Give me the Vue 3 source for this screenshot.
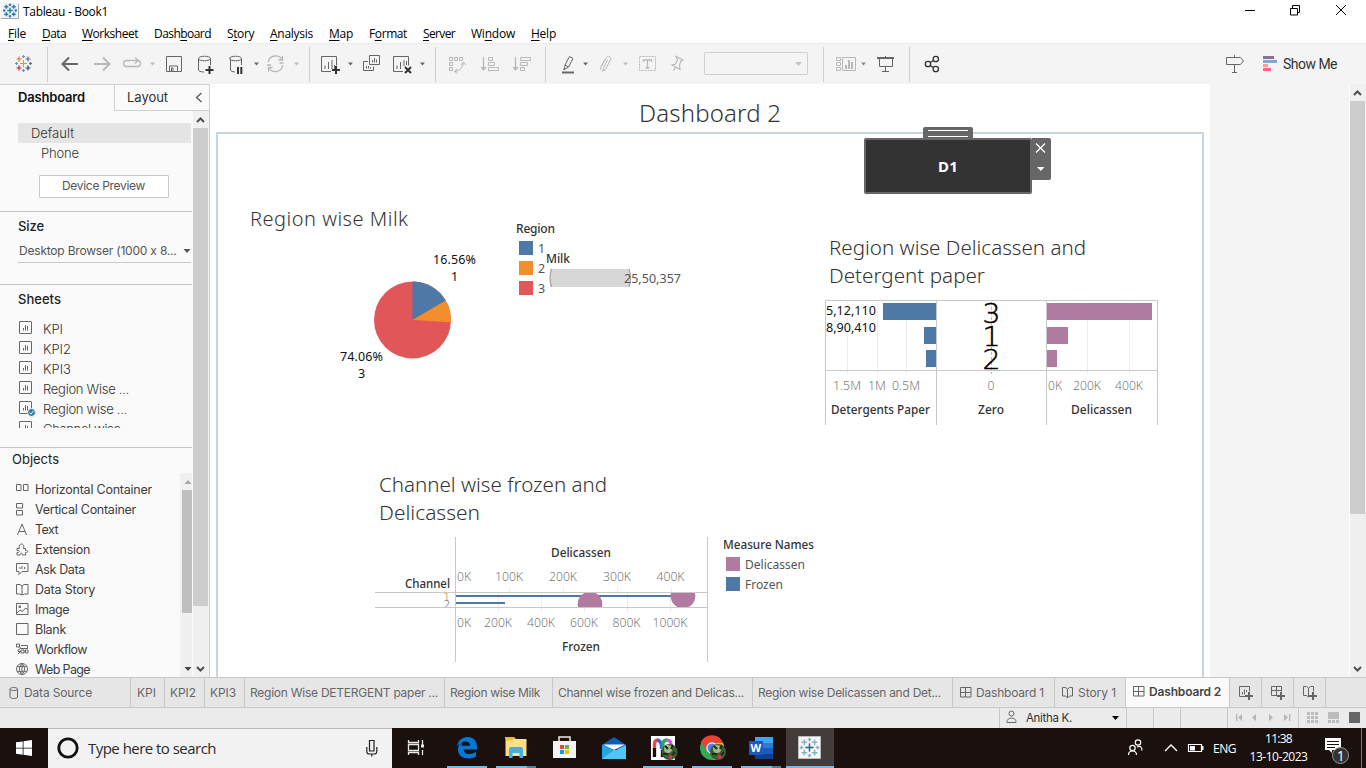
<script setup>
const vFit = {
  mounted(el, { value }) {
    const range = document.createRange()
    range.selectNodeContents(el)
    const natural = range.getBoundingClientRect().width
    el.style.letterSpacing = (value - natural) / el.textContent.length + 'px'
    el.style.width = value + 'px'
  }
}

const menus = [
  ['', 'F', 'ile', 18], ['', 'D', 'ata', 24], ['', 'W', 'orksheet', 56], ['Dash', 'b', 'oard', 57],
  ['S', 't', 'ory', 27], ['', 'A', 'nalysis', 43], ['', 'M', 'ap', 24], ['F', 'o', 'rmat', 38],
  ['', 'S', 'erver', 32], ['Wi', 'n', 'dow', 44], ['', 'H', 'elp', 25]
]

const sheets = [
  { name: 'KPI', w: 20 }, { name: 'KPI2', w: 28 }, { name: 'KPI3', w: 28 },
  { name: 'Region Wise ...', w: 86 }, { name: 'Region wise ...', w: 84, used: true }, { name: 'Channel wise ...', w: 91 }
]

const objects = [
  { name: 'Horizontal Container', w: 117, icon: 'M.5 1.5h4.500v6h-4.500zM7.500 1.500h4.500v6H7.500z' },
  { name: 'Vertical Container', w: 101, icon: 'M.5.5h6v4.500h-6zM.5 7.500h6v4.500h-6z' },
  { name: 'Text', w: 23, icon: 'M1.500 12L6 1L10.500 12M3 8.500h6' },
  { name: 'Extension', w: 55, icon: 'M1 5.500h2.500c-1-3 .5-4.500 2-4.500s3 1.500 2 4.500h2v2c3-.5 3 2.500 0 2V12H6.500c0-2.500-2.500-2.500-2.500 0H1V9.500c3 .5 3-2.500 0-2z' },
  { name: 'Ask Data', w: 50, icon: 'M.5.5h11.500v8H6L3 11.500V8.500H.5zM4 6V4M6 6V3M8.500 6V4' },
  { name: 'Data Story', w: 60, icon: 'M.5 1.500h3.500L6 3l2-1.500h4v9.500H8.500L6 12L3.500 11H.5zM6 3v9' },
  { name: 'Image', w: 34, icon: 'M.5.5h11.500v11H.5zM1 10L4 7l2 1.500l4-3.500l2 2M3 3h1.500v1.500H3z' },
  { name: 'Blank', w: 31, icon: 'M.5.5h11.500v11H.5z' },
  { name: 'Workflow', w: 52, icon: 'M.5 1h3v3h-3zM5 2.500h6.500v3H4.500L2 7v1.500h3M5 7h3v3H5zM8 8.500h1.500M9.500 7h2.500v3H9.500zM2 11l2-2M3.500 4l2 2' },
  { name: 'Web Page', w: 55, icon: 'M6 .5a5.500 5.500 0 1 0 .01 0M6 .5c-3.500 3-3.500 8 0 11c3.500-3 3.500-8 0-11M6 .5v11M1.200 3.700h9.600M1.200 8.300h9.600' }
]

const tabs = [
  { name: 'KPI', w: 34, t: 19, pad: 7 }, { name: 'KPI2', w: 40, t: 26, pad: 6 }, { name: 'KPI3', w: 40, t: 26, pad: 6 },
  { name: 'Region Wise DETERGENT paper ...', w: 200, t: 188, pad: 6 }, { name: 'Region wise Milk', w: 108, t: 90, pad: 6 },
  { name: 'Channel wise frozen and Delicas...', w: 200, t: 186, pad: 6 },
  { name: 'Region wise Delicassen and Det...', w: 200, t: 183, pad: 6 },
  { name: 'Dashboard 1', w: 102, t: 68, pad: 8, icon: 'grid' }, { name: 'Story 1', w: 71, t: 38, pad: 8, icon: 'book' },
  { name: 'Dashboard 2', w: 104, t: 72, pad: 8, icon: 'grid', active: true }
]

const milkTexts = [
  ['Region wise Milk', 250, 226, 158, 'title'],
  ['16.56%', 433, 264, 43, 'mark'], ['1', 451, 281, 7, 'mark'],
  ['74.06%', 340, 361, 43, 'mark'], ['3', 358, 378, 7, 'mark'],
  ['Region', 516, 233, 39, 'head'], ['1', 538, 253, 7, 'item'], ['2', 538, 273, 7, 'item'], ['3', 538, 293, 7, 'item'],
  ['Milk', 546, 263, 24, 'head'], ['25,50,357', 624, 283, 57, 'item']
]
const deliTexts = [
  ['Region wise Delicassen and', 829, 255, 257, 'title'], ['Detergent paper', 829, 283, 156, 'title'],
  ['5,12,110', 826, 315, 50, 'mark'], ['8,90,410', 826, 332, 50, 'mark'],
  ['3', 982.500, 322.500, 18, 'big'], ['1', 982.500, 345.500, 18, 'big'], ['2', 982.500, 368.500, 18, 'big'],
  ['1.5M', 833, 390, 28, 'axis'], ['1M', 868, 390, 18, 'axis'], ['0.5M', 892, 390, 28, 'axis'], ['0', 987.500, 390, 7, 'axis'],
  ['0K', 1048, 390, 14, 'axis'], ['200K', 1073, 390, 28, 'axis'], ['400K', 1115, 390, 28, 'axis'],
  ['Detergents Paper', 831, 414, 99, 'head'], ['Zero', 978, 414, 26, 'head'], ['Delicassen', 1071, 414, 61, 'head']
]
const channelTexts = [
  ['Channel wise frozen and', 379, 492, 228, 'title'], ['Delicassen', 379, 520, 101, 'title'],
  ['Delicassen', 551, 557, 60, 'head'], ['Channel', 405, 588, 45, 'head'], ['Frozen', 562, 651, 38, 'head'],
  ['0K', 457, 581, 14, 'axis'], ['100K', 495, 581, 28, 'axis'], ['200K', 549, 581, 28, 'axis'], ['300K', 603, 581, 28, 'axis'], ['400K', 656.500, 581, 28, 'axis'],
  ['0K', 457, 627, 14, 'axis'], ['200K', 484, 627, 28, 'axis'], ['400K', 527, 627, 28, 'axis'], ['600K', 570, 627, 28, 'axis'], ['800K', 612.500, 627, 28, 'axis'], ['1000K', 652.500, 627, 35, 'axis'],
  ['Measure Names', 723, 549, 91, 'head'], ['Delicassen', 745, 569, 60, 'item'], ['Frozen', 745, 589, 38, 'item']
]

// Small plus signs forming the product mark, centred on 0,0.
const markPluses = [
  [0, 0, 3.500, '#eb912c'], [-4.500, -4.500, 2.500, '#e8762c'], [4.500, -4.500, 2.500, '#5c6692'], [-4.500, 4.500, 2.500, '#c72035'], [4.500, 4.500, 2.500, '#1f457e'],
  [0, -7, 1.500, '#7199a6'], [0, 7, 1.500, '#7b86b5'], [-7, 0, 1.500, '#5b9bb0'], [7, 0, 1.500, '#5c6692']
]
const plus = (x, y, r) => `M${x - r} ${y}h${2 * r}M${x} ${y - r}v${2 * r}`
const allPluses = markPluses.map(p => plus(p[0], p[1], p[2])).join('')
</script>

<template>
  <div class="screen">
    <header class="titlebar">
      <svg width="18" height="20" viewBox="0 0 18 20"><rect x="0" y="3" width="18" height="16" fill="#eef4f8" /><path d="M17.500 4v14.500H0" stroke="#aaa" fill="none" /><path :d="allPluses" transform="translate(9 10.500) scale(.82)" stroke="#2f7db0" stroke-width="1.800" /></svg>
      <span v-fit="85" class="app-name">Tableau - Book1</span>
      <svg class="winctl" width="126" height="22" viewBox="1240 0 126 22"><path d="M1245 10.500h10M1290.500 8.500h7v6.500h-7zM1292.500 8V5.500h7v7h-2M1336 5l10 10M1346 5l-10 10" fill="none" stroke="#000" /></svg>
    </header>
    <nav class="menubar">
      <span v-for="m in menus" :key="m[2]" v-fit="m[3]">{{ m[0] }}<u>{{ m[1] }}</u>{{ m[2] }}</span>
    </nav>

    <div class="toolbar">
      <svg width="48" height="41" viewBox="0 43 48 41"><g transform="translate(23.500 63.500)" fill="none" stroke-width="1.200"><path v-for="(p, i) in markPluses" :key="i" :d="plus(p[0], p[1], p[2])" :stroke="p[3]" /></g><path class="sep" d="M47.500 47v35" /></svg>
      <svg width="262" height="41" viewBox="48 43 262 41">
        <path class="dk" stroke-width="2" d="M78 64H63M69 57.500L62.500 64l6.500 6.500" />
        <path class="lt" stroke-width="2" d="M94 64h15M103 57.500l6.500 6.500l-6.500 6.500" />
        <path class="lt" stroke-width="1.300" d="M133 60.500h-6.500q-3 0-3 3t3 3h11q3 0 3-3t-3-3M132 60.500h6M135 57.500l3.500 3l-3.500 3" />
        <path class="ltf" d="M150 62.500h5l-2.500 3z" />
        <path class="dk" d="M166.500 56.500h15v15h-15zM169.500 71v-5h8v5M171.500 71v-3h1.500v3" />
        <path class="dk" d="M204 72h-1c-3-.3-4.500-1-4.500-2v-11.500M210.500 65v-6.500M198.500 58.500c0-3 12-3 12 0s-12 3-12 0" />
        <path class="bk" stroke-width="2" d="M205.500 70h8M209.500 66v8" />
        <path class="dk" d="M235 72c-3-.3-4.500-1-4.500-2v-11.500M241.500 65v-6.500M229.500 58.500c0-3 12-3 12 0s-12 3-12 0" />
        <path class="bk" stroke-width="2" d="M238 67v7M241.300 67v7" />
        <path class="dkf" d="M254 62.500h5l-2.500 3z" />
        <path class="lt" stroke-width="1.300" d="M268.200 62a7.500 7.500 0 0 1 13.800-2.500M282.800 65a7.500 7.500 0 0 1-13.800 3M282.500 56v4h-4M268.500 71.500v-4h4M279.500 63h4M267 65h4" />
        <path class="ltf" d="M294 62.500h5l-2.500 3z" /><path class="sep" d="M309.500 47v35" />
      </svg>
      <svg width="126" height="41" viewBox="310 43 126 41">
        <path class="dk" d="M331 71.500h-9.500v-15h15v9M325 69v-3.500M328.500 69v-7M332 69v-9M334.500 69v-4" />
        <path class="bk" stroke-width="2" d="M332 70h8M336 66v8" /><path class="dkf" d="M348 62.500h5l-2.500 3z" />
        <path class="dk" d="M369.500 55.500h10v9h-10zM368 61.500h-4.500v9h10V66.500M372.500 62.500V60M374.500 62.500v-4.500M376.500 62.500v-3M366.500 68.500V66M368.500 68.500V66M370.500 68.500V67" />
        <path class="dk" d="M403 71.500h-9.500v-15h15v9M397 69v-3.500M400.500 69v-7M404 66v-6M406.500 65v-4" />
        <path class="bk" stroke-width="2" d="M405 67l6 6M411 67l-6 6" /><path class="dkf" d="M420 62.500h5l-2.500 3z" /><path class="sep" d="M435.500 47v35" />
      </svg>
      <svg width="110" height="41" viewBox="436 43 110 41">
        <path class="lt" d="M449.500 57.500h3v3h-3zM454.500 57.500h3v3h-3zM459.500 57.500h3v3h-3zM449.500 62.500h3v3h-3zM449.500 67.500h3v3h-3zM455 71.500q7-1 8.500-9M461 65l2.500-3l2.500 3M457.500 69l-3 2.500l3 2" />
        <path class="lt" stroke-width="1.300" d="M483.500 57v13" /><path class="ltf" d="M480.500 67h6l-3 4z" /><path class="lt" d="M488.500 57.500h4v3h-4zM488.500 62.500h6v3h-6zM488.500 67.500h10v3h-10z" />
        <path class="lt" stroke-width="1.300" d="M515.500 57v13" /><path class="ltf" d="M512.500 67h6l-3 4z" /><path class="lt" d="M520.500 57.500h10v3h-10zM520.500 62.500h7v3h-7zM520.500 67.500h4v3h-4z" />
        <path class="sep" d="M545.500 47v35" />
      </svg>
      <svg width="278" height="41" viewBox="546 43 278 41">
        <path class="dk" d="M569.500 56.500l3.500 2l-4.500 8.500l-3.500-2zM565 65l-.5 4.500l4-2.500" /><path class="dk" stroke-width="2" d="M562 72.500h12" /><path class="dkf" d="M583 62.500h5l-2.500 3zM563 70l2 0l-1-2z" />
        <path class="lt" d="M607.500 60l-4 7.500c-1 2 1 3 2 1.500l5-9c1.500-3-2.500-5-4-2.500l-5.500 9c-1.500 3 2 6 4 3.500M601.500 66l3.500-6.500" /><path class="ltf" d="M623 62.500h5l-2.500 3z" />
        <path class="lt" stroke-dasharray="2 1" d="M639.500 56.500h16v14h-16z" /><path class="lt" stroke-width="1.300" d="M643.500 62v-2h8v2M647.500 60v8M645.500 68h4" />
        <path class="lt" stroke-width="1.200" d="M676 56.500l7 3.500l-2 1l-1.500 4l.5 4.500l-8-4.500l3.500-1l2-4.500zM675.500 67l-2 3.500" />
        <rect class="box" x="704.500" y="52.500" width="103" height="22" rx="1" /><path fill="#c5c5c5" d="M795 62h7l-3.500 4z" /><path class="sep" d="M823.500 47v35" />
      </svg>
      <svg width="86" height="41" viewBox="824 43 86 41">
        <path class="lt" d="M836.500 57.500h4v3h-4zM836.500 62.500h4v3h-4zM836.500 67.500h4v3h-4zM842.500 57.500h13v13h-13z" /><path class="ltf" d="M845 65h2v4h-2zM848 60h2v9h-2zM851 62h2v7h-2z" /><path fill="#888" d="M861 62.500h5l-2.500 3z" />
        <path class="dk" stroke-width="2" d="M877 58h17" /><path class="dk" d="M879.500 58v8.500h13V58M885.500 56v1M885.500 67v4.500M882 71.500h7" /><path class="sep" d="M909.500 47v35" />
      </svg>
      <svg width="40" height="41" viewBox="910 43 40 41"><g fill="none" stroke="#333" stroke-width="1.300"><circle cx="928" cy="64" r="2.700" /><circle cx="935.800" cy="59" r="2.700" /><circle cx="935.800" cy="69" r="2.700" /><path d="M930.300 62.500l3.200-2M930.300 65.500l3.200 2" /></g></svg>
      <svg class="push" width="62" height="41" viewBox="1221 43 62 41"><path class="dk" d="M1226.500 57.500h14l3 3.500l-3 3.500h-14zM1234.500 55v2M1234.500 65v7M1232 72.500h5" /><path fill="#8a6f98" d="M1263 56h11v3h-11z" /><path fill="#7fa8d0" d="M1263 60h14v3h-14z" /><path fill="#f4a582" d="M1263 64h5v3h-5z" /><path fill="#f8687a" d="M1263 68h8v3h-8z" /></svg>
      <span v-fit="54" class="showme">Show Me</span>
    </div>

    <main class="work">
      <aside class="side">
        <div class="side-tabs">
          <div class="on"><span v-fit="67">Dashboard</span></div>
          <div class="off"><span v-fit="41">Layout</span><svg width="10" height="14" viewBox="0 0 10 14"><path d="M7.500 2L2.500 6.500l5 4.500" fill="none" stroke="#555" stroke-width="1.300" /></svg></div>
        </div>
        <div class="side-body">
          <div class="side-content">
            <section class="devices">
              <div class="device sel"><span v-fit="43">Default</span></div>
              <div class="device sub"><span v-fit="38">Phone</span></div>
              <div class="preview"><span v-fit="83">Device Preview</span></div>
            </section>
            <section class="size">
              <h3><span v-fit="26">Size</span></h3>
              <div class="select"><span v-fit="159">Desktop Browser (1000 x 8...</span><svg width="8" height="6" viewBox="0 0 8 6"><path d="M.5 1h7L4 5z" fill="#555" /></svg></div>
            </section>
            <section class="sheets">
              <h3><span v-fit="43">Sheets</span></h3>
              <div class="sheet-list">
                <div v-for="s in sheets" :key="s.name" class="sheet">
                  <svg width="17" height="18" viewBox="0 0 17 18"><rect x=".5" y="2.500" width="12" height="12" rx=".5" class="dk" /><path class="dk" d="M4.500 11.500V9M6.500 11.500V6M8.500 11.500V7" /><g v-if="s.used"><circle cx="12.500" cy="13.500" r="4" fill="#2c7f9e" stroke="#fafafa" /><path d="M10.500 13.500l1.500 1.500l2.500-3" fill="none" stroke="#fff" /></g></svg>
                  <span v-fit="s.w">{{ s.name }}</span>
                </div>
              </div>
            </section>
            <section class="objects">
              <h3><span v-fit="47">Objects</span></h3>
              <div class="object-wrap">
                <div class="object-list">
                  <div v-for="o in objects" :key="o.name" class="object"><svg width="13" height="13" viewBox="0 0 13 13"><path class="dk" :d="o.icon" /></svg><span v-fit="o.w">{{ o.name }}</span></div>
                </div>
                <div class="inner-scroll"><svg width="12" height="17" viewBox="0 0 12 17"><path d="M4.500 11h7L8 7z" fill="#a8a8a8" /></svg><i></i><svg width="12" height="17" viewBox="0 0 12 17"><path d="M4.500 7h7L8 11z" fill="#444" /></svg></div>
              </div>
            </section>
          </div>
          <div class="scroll"><svg width="15" height="17" viewBox="0 0 15 17"><path class="arrow" d="M4 11l3.500-3.500L11 11" /></svg><i class="side-thumb"></i><svg width="15" height="17" viewBox="0 0 15 17"><path class="arrow" d="M4 7l3.500 3.500L11 7" /></svg></div>
        </div>
      </aside>

      <div class="canvas">
        <h1><span v-fit="142">Dashboard 2</span></h1>
        <div class="frame"></div>

        <svg class="zone milk" width="450" height="190" viewBox="245 200 450 190">
          <circle cx="412.500" cy="320" r="38.500" fill="#e15759" />
          <path d="M412.500 320V281.500A38.500 38.500 0 0 1 445.700 300.500z" fill="#4e79a7" />
          <path d="M412.500 320L445.700 300.500A38.500 38.500 0 0 1 450.930 322.300z" fill="#f28e2b" />
          <path fill="#4e79a7" d="M519 241h14v14h-14z" /><path fill="#f28e2b" d="M519 261h14v14h-14z" /><path fill="#e15759" d="M519 281h14v14h-14z" />
          <path d="M550 269h80v18h-80z" fill="#d7d7d7" /><path d="M551.500 269q-3 9 0 18M629 269q3 9 0 18" fill="none" stroke="#a5a5a5" stroke-width="1.200" />
          <text v-for="(t, i) in milkTexts" :key="i" :x="t[1]" :y="t[2]" :textLength="t[3]" :class="t[4]">{{ t[0] }}</text>
        </svg>

        <svg class="zone deli" width="350" height="205" viewBox="820 225 350 205">
          <path stroke="#ededed" d="M847.500 302v72M877.500 302v72M906.500 302v72M1087.500 302v72M1129.500 302v72" /><path stroke="#bbb" stroke-dasharray="3 2" d="M991.500 302v72" />
          <path fill="#4e79a7" d="M883 303h53v17h-53zM924 327h12v17h-12zM926 350h10v17h-10z" />
          <path fill="#b07aa1" d="M1047 303h105v17h-105zM1047 327h21v17h-21zM1047 350h10v17h-10z" />
          <path fill="none" stroke="#c8c8c8" d="M825.500 425V300.500h332V425M936.500 300v125M1046.500 300v125M825 370.500h332" />
          <text v-for="(t, i) in deliTexts" :key="i" :x="t[1]" :y="t[2]" :textLength="t[3]" :class="t[4]" lengthAdjust="spacingAndGlyphs">{{ t[0] }}</text>
        </svg>

        <svg class="zone channel" width="450" height="200" viewBox="370 465 450 200">
          <defs><clipPath id="pane"><path d="M376 593h331v14h-331z" /></clipPath></defs>
          <path stroke="#ededed" d="M509.500 587v6M563.500 587v6M617.500 587v6M671.500 587v6M498.500 593v19M541.500 593v19M584.500 593v19M627.500 593v19M670.500 593v19" />
          <g clip-path="url(#pane)"><path fill="#4e79a7" d="M456 595h234v2h-234zM456 602h49v2h-49z" /><circle cx="590" cy="604" r="12.300" fill="#b07aa1" /><circle cx="683" cy="596" r="12.300" fill="#b07aa1" />
            <text x="443" y="601" textLength="7" class="axis orange">1</text><text x="443" y="609" textLength="7" class="axis">2</text></g>
          <path fill="none" stroke="#c8c8c8" d="M455.500 537v125M707.500 537v125M375 592.500h332M375 607.500h332" />
          <path fill="#b07aa1" d="M726 557h14v14h-14z" /><path fill="#4e79a7" d="M726 577h14v14h-14z" />
          <text v-for="(t, i) in channelTexts" :key="i" :x="t[1]" :y="t[2]" :textLength="t[3]" :class="t[4]" lengthAdjust="spacingAndGlyphs">{{ t[0] }}</text>
        </svg>

        <div class="navbtn">
          <div class="grip"></div>
          <span v-fit="20">D1</span>
          <div class="ctl"><svg width="19" height="42" viewBox="0 0 19 42"><path d="M4 5.500l9 9M13 5.500l-9 9" stroke="#fff" stroke-width="1.300" /><path d="M5 29h7.500l-3.700 4z" fill="#fff" /></svg></div>
        </div>
      </div>
      <div class="gutter"></div>
      <div class="scroll main-scroll"><svg width="15" height="17" viewBox="0 0 15 17"><path class="arrow" d="M4 11l3.500-3.500L11 11" /></svg><i class="main-thumb"></i><svg width="15" height="17" viewBox="0 0 15 17"><path class="arrow" d="M4 7l3.500 3.500L11 7" /></svg></div>
    </main>

    <div class="tabs">
      <div class="tab source"><svg width="10" height="14" viewBox="0 0 10 14"><path class="dk" d="M1 3v8c0 2 7.500 2 7.500 0V3M1 3c0-2 7.500-2 7.500 0s-7.500 2-7.500 0" /></svg><span v-fit="68">Data Source</span></div>
      <div v-for="t in tabs" :key="t.name" class="tab" :class="{ active: t.active }" :style="{ width: t.w + 'px', paddingLeft: t.pad - 1 + 'px' }">
        <svg v-if="t.icon" width="12" height="13" viewBox="0 0 12 13"><path v-if="t.icon === 'grid'" class="dk" d="M.5 1.500h10.500v9.500H.5zM5.500 1.500V11M.5 6.500H11" /><path v-else class="dk" d="M.5 1.500h3L5.500 3l2-1.500h3V10h-3l-2 2l-2-2h-3zM5.500 3v9" /></svg>
        <span v-fit="t.t">{{ t.name }}</span>
      </div>
      <div class="tab add"><svg width="18" height="18" viewBox="0 0 18 18"><path class="dk" d="M8 12.500H2.500v-10h10v5M5.500 10.500V8M7.500 10.500V5.500M9.500 8V6" /><path stroke="#666" stroke-width="2" d="M8 12h8M12 8v8" /></svg></div>
      <div class="tab add"><svg width="18" height="18" viewBox="0 0 18 18"><path class="dk" d="M8 11.500H2.500v-9h10v5M7.500 2.500v9M2.500 6.500h10" /><path stroke="#666" stroke-width="2" d="M8 12h8M12 8v8" /></svg></div>
      <div class="tab add"><svg width="18" height="18" viewBox="0 0 18 18"><path class="dk" d="M12.500 7.500v-5h-3l-2 1.500l-2-1.500h-3v9h3l2 1.500M7.500 4v9" /><path stroke="#666" stroke-width="2" d="M8 12h8M12 8v8" /></svg></div>
      <div class="tab-rest"></div>
    </div>

    <div class="status">
      <div class="user"><svg width="12" height="14" viewBox="0 0 12 14"><circle cx="5.500" cy="3.500" r="2.500" class="dk" /><path class="dk" d="M1 12.500c-.5-6 9.500-6 9 0z" /></svg><span v-fit="46">Anitha K.</span><svg width="9" height="6" viewBox="0 0 9 6"><path d="M1 1h7L4.500 5z" fill="#000" /></svg></div>
      <div class="cell c27"></div><div class="cell c27"></div><div class="cell c47"></div>
      <div class="cell c71"><svg width="70" height="19" viewBox="1228 708 70 19"><path fill="#b5b5b5" d="M1242 714v7l-4-3.500zM1256 714v7l-4-3.500zM1269 714v7l4-3.500zM1284 714v7l4-3.500zM1236 714h1.300v7h-1.300zM1289 714h1.300v7h-1.300z" /></svg></div>
      <div class="cell views"><svg width="66" height="19" viewBox="1299 708 66 19"><path fill="#bcbcbc" d="M1307 712h3v3h-3zM1311 712h3v3h-3zM1315 712h3v3h-3zM1307 716h3v3h-3zM1311 716h3v3h-3zM1315 716h3v3h-3zM1307 720h3v3h-3zM1311 720h3v3h-3zM1315 720h3v3h-3zM1328 712h11v7h-11zM1328 720h3v3h-3zM1332 720h3v3h-3zM1336 720h3v3h-3z" /><path fill="#666" d="M1349 712h11v11h-11z" /></svg></div>
    </div>

    <footer class="taskbar">
      <div class="start"><svg width="16" height="16" viewBox="0 0 16 16"><path fill="#fff" d="M0 2.300l6.700-.9v6.300H0zM7.500 1.300L16 0v7.700H7.500zM0 8.500h6.700v6.200L0 13.800zM7.500 8.500H16V16l-8.500-1.200z" /></svg></div>
      <div class="search">
        <svg width="22" height="22" viewBox="0 0 22 22"><circle cx="11" cy="11" r="9.200" fill="none" stroke="#111" stroke-width="2.800" /></svg>
        <span v-fit="128">Type here to search</span>
        <svg width="12" height="18" viewBox="0 0 12 18"><path fill="none" stroke="#222" stroke-width="1.200" d="M3.500 1.500h4.500v10.500H3.500zM.8 8v4.500q0 2.500 2.500 2.500h5q2.500 0 2.500-2.500V8M5.800 15v2.500" /></svg>
      </div>
      <svg width="442" height="40" viewBox="392 728 442 40">
        <path fill="none" stroke="#e8e8e8" stroke-width="1.300" d="M408.500 740v2.500h10V740M408.500 744.500h10v6h-10zM408.500 755v-2.500h10v2.500M422.500 740v5M422.500 750v5" /><path fill="#e8e8e8" d="M421 744.500h3v3h-3z" />
        <path fill="#0078d7" d="M457 746.500c1-6 5.500-9.500 10.500-9.500c6 0 9.500 4 9.500 9.500v3h-13.500c.3 3 2.500 4.500 5.500 4.500c2.500 0 5-.7 7-2v4.500c-2 1.300-4.800 1.900-8 1.900c-6.500 0-10-4-10-9c0-3.500 1.800-6.300 5-7.600c-1.200 1.200-1.400 2.500-1.500 4h8.500c0-2.700-1.500-4.400-4.500-4.400c-3.500 0-6.500 2-8.500 5.100z" />
        <path fill="#e9b93c" d="M505 737h9l2 2h-11z" /><path fill="#ffe08a" d="M505.500 739h21v17h-21z" /><path fill="#f5c94c" d="M506 739h7v2h-7z" /><path fill="#3fb1e3" d="M509 758v-9q0-2 2-2h10q2 0 2 2v9h-3.500v-5h-7v5z" />
        <path fill="none" stroke="#eee" stroke-width="1.500" d="M559 742v-5h11v5" /><path fill="#f4f4f4" d="M553 741h23v17h-23z" /><path fill="#e74c2b" d="M560 745h4v4h-4z" /><path fill="#7cb719" d="M565 745h4v4h-4z" /><path fill="#05a0ec" d="M560 750h4v4h-4z" /><path fill="#fcb713" d="M565 750h4v4h-4z" />
        <path fill="#0a5fb4" d="M602 745l12-8l12 8v4h-24z" /><path fill="#50c8f5" d="M602 745l10 5h4l10-5v14h-24z" /><path fill="#f5fbff" d="M603 744.500h22l-11 5.500z" /><path fill="#22a7e6" d="M602 759l12-9l-12-5z" />
        <path fill="#fff" d="M651 736h24v24h-24z" /><g fill="none" stroke-width="3.300"><path d="M654.500 749v-5q0-3.500 3-4" stroke="#f34540" /><path d="M657 740q4 .5 4.500 6v3" stroke="#2965ea" /><path d="M663 751v-8q1-3 4-3" stroke="#35a35b" /><path d="M667 740q4 .5 4 5" stroke="#e04cf0" /><path d="M654.500 748v9M662.500 750v7" stroke="#111" /></g><circle cx="669.500" cy="752" r="8" fill="#3c5b35" /><circle cx="668" cy="749" r="4" fill="#a3b78d" /><path stroke="#1c2d18" stroke-width="2" d="M665 746l3 3M673 745l-2 4M663 754h5M672 755l3-3" /><circle cx="670.500" cy="757" r="2" fill="#d43945" />
        <circle cx="712" cy="748" r="12" fill="#34a853" /><path fill="#ea4335" d="M701 742a12 12 0 0 1 22 1h-11l-5 8z" /><path fill="#fbbc05" d="M723 743a12 12 0 0 1-10 17l5-9l-2-8z" /><circle cx="712" cy="748" r="5.700" fill="#fff" /><circle cx="712" cy="748" r="4.500" fill="#4285f4" /><circle cx="718" cy="752" r="8" fill="#3c5b35" /><circle cx="717" cy="749" r="4" fill="#a3b78d" /><path stroke="#1c2d18" stroke-width="2" d="M714 746l3 3M722 745l-2 4M712 754h5M721 755l3-3" /><circle cx="719.500" cy="757" r="2" fill="#d43945" />
        <path fill="#41a5ee" d="M755 737h18v6h-18z" /><path fill="#2b7cd3" d="M755 743h18v5h-18z" /><path fill="#185abd" d="M755 748h18v6h-18z" /><path fill="#103f91" d="M755 754h18v5h-18z" /><path fill="#185abd" d="M749 741h14v14h-14z" /><text x="750.500" y="752" class="word">W</text>
        <path fill="#433c3a" d="M786 728h48v40h-48z" /><path fill="#f5f7f8" stroke="#bbb" d="M798.500 736.500h22v22h-22z" /><path :d="allPluses" transform="translate(809.500 747.500) scale(1.150)" stroke="#8cb1c6" stroke-width="1.300" /><path :d="plus(809.500, 747.500, 4)" stroke="#2a6b8f" stroke-width="1.300" />
        <path fill="#76b9ed" d="M447 766h40v2h-40zM496 766h31v2h-31zM643 766h40v2h-40zM692 766h40v2h-40zM741 766h31v2h-31zM786 766h48v2h-48z" /><path fill="#4f7fa5" d="M527 766h9v2h-9zM772 766h9v2h-9z" />
      </svg>
      <svg class="push" width="90" height="40" viewBox="1123 728 90 40"><g fill="none" stroke="#fff" stroke-width="1.200"><circle cx="1132.500" cy="748" r="2.700" /><path d="M1128.500 755q0-4 4-4t4 4" /><circle cx="1138" cy="742.500" r="2.700" /><path d="M1137 747q5-2 5 3.500" /><path d="M1165 751l6-6l6 6" stroke-width="1.400" /><path d="M1188.500 744.500h13v7h-13z" /></g><path fill="#fff" d="M1190 746h5v4.500h-5zM1202 746h1.500v4h-1.500z" /></svg>
      <span v-fit="23" class="lang">ENG</span>
      <div class="clock"><span v-fit="27">11:38</span><span v-fit="58">13-10-2023</span></div>
      <svg width="43" height="40" viewBox="1323 728 43 40"><path fill="#fff" d="M1325 738h16v12h-9v3l-3-3h-4z" /><path stroke="#1a110e" d="M1327 741.500h12M1327 744.500h12M1327 747.500h8" /><circle cx="1340.500" cy="755.500" r="8" fill="#333" stroke="#999" /><text x="1336.800" y="760.500" class="badge">1</text><path stroke="#777" d="M1361.500 728v40" /></svg>
    </footer>
  </div>
</template>

<style>
body { overflow: hidden; }
</style>

<style scoped>
* { box-sizing: border-box; }
.screen { width: 1366px; height: 768px; display: flex; flex-direction: column; background: #fff; font-family: Inter, "Liberation Sans", sans-serif; font-size: 12px; color: #333; overflow: hidden; }
svg { display: block; flex: none; }
span { display: inline-block; white-space: nowrap; flex: none; }
.dk { fill: none; stroke: #666; }
.lt { fill: none; stroke: #b8b8b8; }
.bk { fill: none; stroke: #333; }
.dkf { fill: #666; }
.ltf { fill: #b8b8b8; }
.sep { stroke: #d0d0d0; }
.box { fill: none; stroke: #cfcfcf; }
.push { margin-left: auto; }
.titlebar { height: 24px; display: flex; padding-left: 1px; font-family: "Open Sans", sans-serif; color: #000; }
.app-name { margin-left: 4px; line-height: 23px; }
.winctl { margin-left: auto; }
.menubar { height: 19px; display: flex; gap: 16px; padding-left: 8px; line-height: 19px; font-family: "Open Sans", sans-serif; color: #000; }
.menubar u { text-underline-offset: 2px; }
.toolbar { height: 41px; background: #f4f4f4; display: flex; box-shadow: inset 0 1px #ebebeb; }
.showme { font: 14px/42px Roboto, sans-serif; margin-right: 29px; color: #333; }
.work { height: 593px; display: flex; background: #f4f4f4; }
.side { width: 210px; background: #fafafa; border-top: 1px solid #d0d0d0; border-right: 1px solid #d0d0d0; display: flex; flex-direction: column; }
.side-tabs { height: 26px; display: flex; font-size: 13px; line-height: 25px; }
.side-tabs .on { width: 114px; padding-left: 18px; font-weight: 600; color: #111; }
.side-tabs .off { flex: 1; border-left: 1px solid #d0d0d0; border-bottom: 1px solid #d0d0d0; padding: 0 5px 0 12px; display: flex; justify-content: space-between; align-items: center; }
.side-body { flex: 1; display: flex; min-height: 0; }
.side-content { width: 192px; margin-right: 1px; height: 566px; overflow: hidden; }
.scroll { width: 16px; background: #f0f0f0; display: flex; flex-direction: column; justify-content: space-between; }
.scroll i { background: #cdcdcd; width: 15px; flex: none; }
.arrow { fill: none; stroke: #505050; stroke-width: 2; }
.side-thumb { height: 478px; margin-bottom: auto; }
.devices { height: 101px; padding-top: 12px; border-bottom: 1px solid #c6c6c6; font-size: 13px; font-weight: 300; }
.device { height: 20px; line-height: 20px; margin: 0 1px 0 18px; padding-left: 13px; }
.device.sub { padding-left: 23px; }
.device.sel { background: #e5e5e5; }
.preview { width: 130px; height: 23px; margin: 12px 0 0 39px; border: 1px solid #c8c8c8; border-radius: 1px; background: #fff; padding-left: 22px; line-height: 20px; font-size: 12px; font-weight: 400; color: #555; }
h3 { margin: 0; font-size: 13px; font-weight: 500; line-height: 20px; height: 20px; color: #222; }
.size { height: 73px; padding: 4px 1px 0 18px; border-bottom: 1px solid #c6c6c6; }
.select { margin-top: 4px; height: 23px; border-bottom: 1px solid #c8c8c8; line-height: 22px; display: flex; align-items: center; justify-content: space-between; padding-left: 1px; color: #555; }
.sheets { height: 163px; padding: 4px 0 0 18px; border-bottom: 1px solid #c6c6c6; }
.sheet-list { margin-top: 11px; height: 108px; overflow: hidden; }
.sheet { height: 20px; display: flex; gap: 7px; padding-left: 1px; line-height: 19px; font-size: 13px; font-weight: 300; }
.sheet svg { margin-top: -1px; }
.objects h3 { padding-left: 12px; margin-top: 1px; font-weight: 400; }
.object-wrap { display: flex; justify-content: space-between; margin-top: 4px; height: 204px; }
.object-list { padding: 6px 0 0 16px; overflow: hidden; }
.object { height: 20px; display: flex; align-items: center; gap: 6px; font-size: 12.5px; color: #3d3d3d; }
.inner-scroll { width: 12px; background: #f0f0f0; display: flex; flex-direction: column; }
.inner-scroll i { width: 10px; height: 123px; margin: 0 0 auto 2px; background: #bfbfbf; }
.canvas { width: 1000px; height: 593px; background: #fff; position: relative; overflow: hidden; }
h1 { margin: 0; padding: 11px 0 0 429px; font: 300 24px/36px "Noto Sans", sans-serif; color: #333; height: 48px; }
.frame { height: 560px; margin: 0 6px; border: 2px solid #c9d6df; }
.zone { position: absolute; }
.milk { left: 35px; top: 116px; }
.deli { left: 610px; top: 141px; }
.channel { left: 160px; top: 381px; }
text { font-family: "Noto Sans", sans-serif; font-size: 12px; fill: #333; }
.title { font-size: 20px; font-weight: 300; }
.mark { font-size: 12.5px; fill: #111; }
.axis { font-size: 12.5px; fill: #777; font-weight: 300; }
.orange { fill: #d07a4a; }
.item { font-size: 12.5px; fill: #555; }
.head { font-weight: 500; }
.big { font-family: "DejaVu Sans", sans-serif; font-weight: 200; font-size: 26px; fill: #000; stroke: #000; stroke-width: .5px; }
.navbtn { position: absolute; left: 654px; top: 54px; width: 168px; height: 56px; background: #333; border: 2px solid #666; border-radius: 2px; color: #fff; font: bold 15px/53px "Noto Sans", sans-serif; text-align: center; }
.grip { position: absolute; left: 57px; top: -13px; width: 50px; height: 11px; background: #666; border-radius: 2px 2px 0 0; }
.grip::after { content: ""; position: absolute; left: 5px; top: 3px; width: 40px; height: 5px; border: solid #fff; border-width: 1px 0; }
.ctl { position: absolute; left: 166px; top: -2px; background: #666; border-radius: 0 2px 2px 0; }
.gutter { width: 139px; }
.main-scroll { width: 17px; border-left: 1px solid #fff; }
.main-thumb { height: 413px; margin-bottom: auto; }
.tabs { height: 31px; display: flex; border-top: 1px solid #c8c8c8; border-bottom: 1px solid #c8c8c8; background: #e6e6e6; color: #666; }
.tab { border-right: 1px solid #c8c8c8; display: flex; align-items: center; gap: 4px; padding-bottom: 0; flex: none; }
.source { width: 131px; padding-left: 9px; gap: 5px; }
.active { background: #fafafa; font-weight: 600; color: #444; padding-bottom: 2px; }
.add { width: 32px; justify-content: center; }
.status { height: 20px; background: #ebebeb; display: flex; justify-content: flex-end; }
.user { width: 127px; border-left: 1px solid #c8c8c8; display: flex; align-items: center; padding: 0 6px; font-size: 11.5px; }
.user > svg:first-child { margin-top: -2px; }
.user span { margin: 0 auto 0 8px; }
.cell { border-left: 1px solid #c8c8c8; }
.c27 { width: 27px; }
.c47 { width: 47px; }
.c71 { width: 71px; }
.views { width: 68px; }
.taskbar { height: 40px; background: #1a110e; display: flex; align-items: center; color: #fff; font-family: "Open Sans", sans-serif; }
.start { width: 48px; display: flex; justify-content: center; }
.search { width: 344px; height: 40px; background: #f2f2f2; border-top: 1px solid #bbb; display: flex; align-items: center; padding: 0 14px 0 9px; font-size: 15px; color: #2b2b2b; }
.search span { margin: 0 auto 2px 9px; line-height: 36px; }
.search svg { margin-bottom: 1px; }
.lang { font-size: 12px; }
.clock { width: 85px; margin-right: 2px; display: flex; flex-direction: column; align-items: center; font-size: 12px; line-height: 18px; }
.word { font: bold 11px "Open Sans", sans-serif; fill: #fff; }
.badge { font: 14px "Open Sans", sans-serif; fill: #fff; }
</style>
